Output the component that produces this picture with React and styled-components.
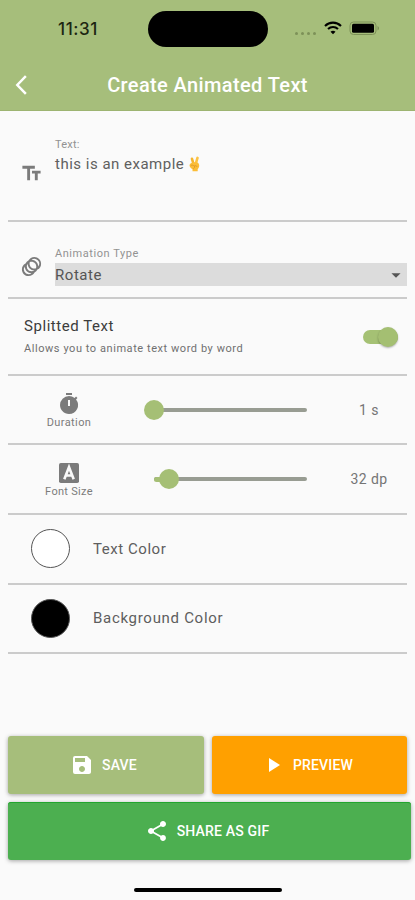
import { useState } from "react"
import styled, { createGlobalStyle } from "styled-components"
import {
  MdAnimation,
  MdArrowDropDown,
  MdPlayArrow,
  MdSave,
  MdShare,
  MdTextFields,
  MdTimer,
} from "react-icons/md"

const colors = [
  { id: "text", label: "Text Color", value: "#ffffff", spacing: 0.55 },
  { id: "background", label: "Background Color", value: "#000000", spacing: 0.7 },
]

export default function App() {
  const [isSplitted, setIsSplitted] = useState(true)

  return (
    <>
      <GlobalStyle />
      <Screen>
        <Header>
          <StatusBar>
            <Clock>11:31</Clock>
            <Island />
            <StatusIcons>
              <SignalDots>
                <i />
                <i />
                <i />
                <i />
              </SignalDots>
              <WifiIcon />
              <BatteryIcon />
            </StatusIcons>
          </StatusBar>
          <TitleBar>
            <BackButton aria-label="Back">
              <svg width="12" height="20" viewBox="0 0 12 20">
                <path
                  d="M10 2 2.300 10 10 18"
                  fill="none"
                  stroke="#fff"
                  strokeWidth="2.500"
                  strokeLinecap="square"
                />
              </svg>
            </BackButton>
            <Title>Create Animated Text</Title>
          </TitleBar>
        </Header>

        <Form>
          <FieldRow $height={111} $top={26}>
            <FieldIcon $top={25}>
              <MdTextFields />
            </FieldIcon>
            <Field>
              <FieldLabel $spacing={0.2}>Text:</FieldLabel>
              <TextValue>
                this is an example
                <VictoryHand />
              </TextValue>
            </Field>
          </FieldRow>

          <FieldRow $height={77} $top={24}>
            <FieldIcon $top={9}>
              <MdAnimation />
            </FieldIcon>
            <Field>
              <FieldLabel $spacing={0.55}>Animation Type</FieldLabel>
              <Select>
                <span>Rotate</span>
                <MdArrowDropDown />
              </Select>
            </Field>
          </FieldRow>

          <SwitchRow>
            <div>
              <SwitchTitle>Splitted Text</SwitchTitle>
              <SwitchHint>Allows you to animate text word by word</SwitchHint>
            </div>
            <Switch
              role="switch"
              aria-checked={isSplitted}
              $on={isSplitted}
              onClick={() => setIsSplitted(!isSplitted)}
            >
              <SwitchThumb />
            </Switch>
          </SwitchRow>

          <SliderRow $height={69}>
            <SliderLabel $spacing={0.4}>
              <MdTimer />
              <span>Duration</span>
            </SliderLabel>
            <Slider percent={0} />
            <SliderValue>1 s</SliderValue>
          </SliderRow>

          <SliderRow $height={70}>
            <SliderLabel $spacing={0.3}>
              <FontIcon />
              <span>Font Size</span>
            </SliderLabel>
            <Slider percent={10} />
            <SliderValue>32 dp</SliderValue>
          </SliderRow>

          {colors.map((color) => (
            <ColorRow key={color.id}>
              <Swatch $color={color.value} />
              <ColorLabel $spacing={color.spacing}>{color.label}</ColorLabel>
            </ColorRow>
          ))}
        </Form>

        <Actions>
          <ActionButton $color="#a6be7b">
            <MdSave />
            <span>SAVE</span>
          </ActionButton>
          <ActionButton $color="#ffa000">
            <MdPlayArrow />
            <span>PREVIEW</span>
          </ActionButton>
          <ShareButton $color="#4caf50">
            <MdShare />
            <span>SHARE AS GIF</span>
          </ShareButton>
        </Actions>
        <HomeIndicator />
      </Screen>
    </>
  )
}

function Slider({ percent }) {
  return (
    <SliderTrack>
      <SliderFill style={{ width: `${percent}%` }} />
      <SliderThumb style={{ left: `${percent}%` }} />
    </SliderTrack>
  )
}

function WifiIcon() {
  return (
    <svg width="18" height="14" viewBox="0 0 18 14">
      <g fill="none" stroke="#000" strokeWidth="2.1">
        <path d="M1 4.9C5.5 .5 12.500 .5 17 4.900" />
        <path d="M4 8.100C6.900 5.300 11.100 5.300 14 8.100" />
      </g>
      <path d="M6.500 10.700C7.900 9.400 10.100 9.400 11.500 10.700L9 13.300Z" />
    </svg>
  )
}

function BatteryIcon() {
  return (
    <svg width="31" height="15" viewBox="0 0 31 15">
      <rect
        x="1"
        y="1"
        width="26"
        height="12.500"
        rx="3.500"
        fill="none"
        stroke="#7d9158"
        strokeWidth="1"
      />
      <rect x="3" y="2.700" width="22" height="9" rx="1.500" />
      <path d="M28.500 5v4.500c2-.8 2-3.700 0-4.500Z" fill="#7d9158" />
    </svg>
  )
}

function FontIcon() {
  return (
    <svg viewBox="0 0 24 24">
      <rect x="2" y="2" width="20" height="20" rx="1.800" fill="currentColor" />
      <path
        d="M7.300 18.300 12 6.200 16.700 18.300M9 14.500H15"
        fill="none"
        stroke="#fafafa"
        strokeWidth="2.600"
      />
    </svg>
  )
}

function VictoryHand() {
  return (
    <HandSvg width="14" height="16" viewBox="0 0 14 16">
      <g strokeLinecap="round" fill="none">
        <path d="M5.500 8 4 2.800" stroke="#f5b52e" strokeWidth="2.600" />
        <path d="M7.700 8 9.500 1.900" stroke="#fcc344" strokeWidth="2.600" />
      </g>
      <path
        d="M2 8.100C3.700 6 9.500 5.600 10.800 7.700c1 1.800.2 4.200-1.100 5.500v2H4.500v-1.900C2.300 12 .8 9.800 2 8.100Z"
        fill="#fbbd37"
      />
      <path
        d="M3 9.500c1.200-.8 2.200-.3 3.200.5 1.200-.5 2.400-.3 2.900.5M6.600 10.500c.1 1-.3 1.700-1 2.200"
        stroke="#dc962a"
        strokeWidth=".9"
        strokeLinecap="round"
        fill="none"
      />
    </HandSvg>
  )
}

const GlobalStyle = createGlobalStyle`
  * {
    box-sizing: border-box;
  }

  body {
    margin: 0;
    background-color: #fafafa;
    font-family: Roboto, "Liberation Sans", sans-serif;
  }

  button {
    font-family: inherit;
    border: none;
    padding: 0;
    cursor: pointer;
  }
`

const Screen = styled.main`
  display: flex;
  flex-direction: column;
  width: 415px;
  height: 900px;
  overflow: hidden;
  background-color: #fafafa;
`

const Header = styled.header`
  height: 111px;
  background-color: #a6be7b;
  border-bottom: 1px solid #9db471;
`

const StatusBar = styled.div`
  display: grid;
  grid-template-columns: 148px 120px 1fr;
  align-items: center;
  height: 58px;
`

const Clock = styled.span`
  padding-left: 58px;
  font-family: Inter, sans-serif;
  font-size: 17px;
  font-weight: 500;
  letter-spacing: 0.6px;
  color: #1c2612;
`

const Island = styled.div`
  height: 36px;
  border-radius: 18px;
  background-color: #000;
`

const StatusIcons = styled.div`
  display: flex;
  align-items: center;
  padding-left: 27px;

  svg {
    flex-shrink: 0;
    margin-right: 7px;
    margin-top: -2px;
  }
`

const SignalDots = styled.div`
  display: flex;
  gap: 3px;
  margin-top: 8px;
  margin-right: 8px;

  i {
    width: 3px;
    height: 3px;
    border-radius: 50%;
    background-color: #7d9158;
  }
`

const TitleBar = styled.div`
  display: grid;
  grid-template-columns: 48px 1fr 48px;
  align-items: center;
  height: 53px;
`

const BackButton = styled.button`
  display: flex;
  padding-left: 15px;
  background-color: transparent;
`

const Title = styled.h1`
  margin: 0;
  text-align: center;
  font-size: 20px;
  font-weight: 500;
  letter-spacing: 0.38px;
  color: #fff;
  white-space: nowrap;
`

const Form = styled.section`
  display: flex;
  flex-direction: column;
  padding: 0 8px;
`

const Row = styled.div`
  display: flex;
  flex-shrink: 0;
  border-bottom: 2px solid #cbcbcb;
`

const FieldRow = styled(Row)`
  height: ${({ $height }) => $height}px;
  padding-top: ${({ $top }) => $top}px;
`

const FieldIcon = styled.div`
  width: 47px;
  padding-left: 12px;
  padding-top: ${({ $top }) => $top}px;
  font-size: 23px;
  line-height: 0;
  color: #7b7b7b;
`

const Field = styled.div`
  flex: 1;
`

const FieldLabel = styled.div`
  font-size: 11px;
  line-height: 15px;
  letter-spacing: ${({ $spacing }) => $spacing}px;
  color: #929292;
`

const TextValue = styled.div`
  display: flex;
  align-items: center;
  height: 23px;
  font-size: 15px;
  letter-spacing: 0.5px;
  color: #606060;
`

const HandSvg = styled.svg`
  margin-left: 4px;
`

const Select = styled.div`
  display: flex;
  align-items: center;
  justify-content: space-between;
  height: 23px;
  margin-top: 2px;
  background-color: #dcdcdc;
  font-size: 15px;
  letter-spacing: 0.55px;
  color: #555;

  svg {
    width: 22px;
    height: 22px;
  }
`

const SwitchRow = styled(Row)`
  align-items: center;
  justify-content: space-between;
  height: 77px;
  padding: 0 9px 0 16px;
`

const SwitchTitle = styled.div`
  font-size: 15px;
  line-height: 20px;
  letter-spacing: 0.55px;
  color: #3c3c3c;
`

const SwitchHint = styled.div`
  margin-top: 5px;
  font-size: 11px;
  line-height: 16px;
  letter-spacing: 0.56px;
  color: #707070;
`

const Switch = styled.button`
  display: flex;
  align-items: center;
  justify-content: ${({ $on }) => ($on ? "flex-end" : "flex-start")};
  width: 35px;
  height: 14px;
  border-radius: 7px;
  background-color: ${({ $on }) => ($on ? "#a5c174" : "#bdbdbd")};
`

const SwitchThumb = styled.span`
  flex-shrink: 0;
  width: 20px;
  height: 20px;
  border-radius: 50%;
  background-color: #a4bf72;
  box-shadow: 0 1px 2px rgba(0, 0, 0, 0.3);
`

const SliderRow = styled(Row)`
  display: grid;
  grid-template-columns: 122px 1fr 76px;
  align-items: center;
  height: ${({ $height }) => $height}px;
`

const SliderLabel = styled.div`
  display: flex;
  flex-direction: column;
  align-items: center;
  padding-top: 2px;
  font-size: 11px;
  line-height: 14px;
  letter-spacing: ${({ $spacing }) => $spacing}px;
  color: #7c7c7c;

  svg {
    width: 24px;
    height: 24px;
    color: #7b7b7b;
  }
`

const SliderTrack = styled.div`
  position: relative;
  height: 4px;
  margin-left: 24px;
  margin-right: 24px;
  border-radius: 2px;
  background-color: #989c92;
`

const SliderFill = styled.div`
  height: 5px;
  border-radius: 3px;
  background-color: #a5bf75;
`

const SliderThumb = styled.div`
  position: absolute;
  top: -8px;
  width: 20px;
  height: 20px;
  margin-left: -10px;
  border-radius: 50%;
  background-color: #a5bf75;
`

const SliderValue = styled.div`
  text-align: center;
  font-size: 14px;
  letter-spacing: 0.4px;
  color: #757575;
`

const ColorRow = styled(Row)`
  align-items: center;
  height: 69.5px;
  padding-left: 23px;
`

const Swatch = styled.div`
  width: 39px;
  height: 39px;
  border: 1px solid #555;
  border-radius: 50%;
  background-color: ${({ $color }) => $color};
`

const ColorLabel = styled.div`
  margin-left: 23px;
  font-size: 15px;
  letter-spacing: ${({ $spacing }) => $spacing}px;
  color: #5e5e5e;
`

const Actions = styled.div`
  display: grid;
  grid-template-columns: 196px 195px;
  gap: 8px;
  margin-top: auto;
  padding-left: 8px;
`

const ActionButton = styled.button`
  display: flex;
  align-items: center;
  justify-content: center;
  gap: 8px;
  height: 58px;
  padding-right: 5px;
  border-radius: 3px;
  background-color: ${({ $color }) => $color};
  box-shadow: 0 1px 4px rgba(0, 0, 0, 0.35);
  color: #fff;
  font-size: 14px;
  font-weight: 500;
  letter-spacing: 0.18px;

  svg {
    width: 24px;
    height: 24px;
  }
`

const ShareButton = styled(ActionButton)`
  grid-column: 1 / -1;
  width: 403px;
  box-shadow: inset 0 1px #22a52e, 0 1px 4px rgba(0, 0, 0, 0.35);
`

const HomeIndicator = styled.div`
  flex-shrink: 0;
  width: 148px;
  height: 4px;
  margin: 28px auto 8px;
  border-radius: 2px;
  background-color: #000;
`
